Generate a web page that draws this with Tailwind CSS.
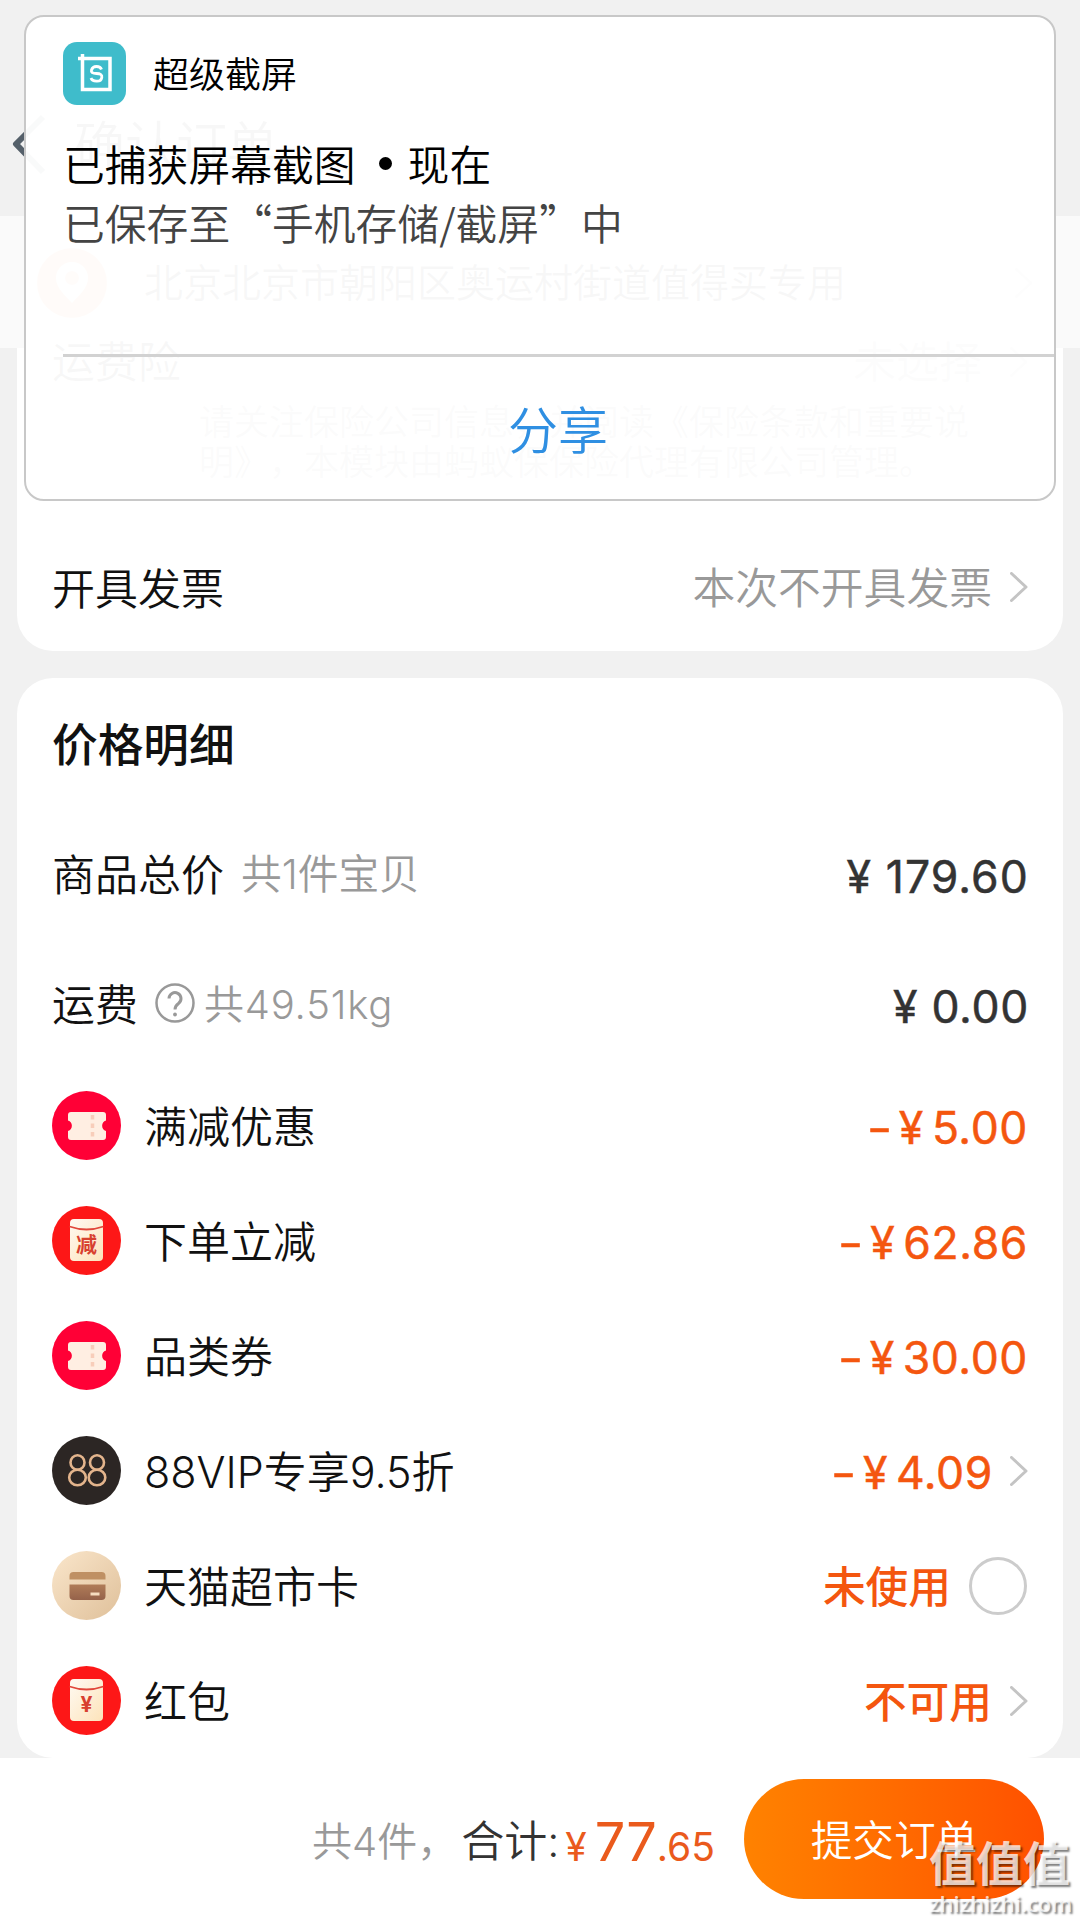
<!DOCTYPE html>
<html lang="zh-CN">
<head>
<meta charset="utf-8">
<title>确认订单</title>
<script src="https://cdn.jsdelivr.net/npm/@tailwindcss/browser@4"></script>
</head>
<body class="relative w-[1080px] h-[1920px] overflow-hidden bg-[#f1f1f1] font-['Inter','Noto_Sans_CJK_SC',sans-serif] text-[43px] leading-[60px] font-[350] text-[#111] [text-spacing-trim:space-all]">
<svg class="absolute size-0">
  <defs>
    <symbol id="chev" viewBox="0 0 18 30"><path d="M1.5 1.5 16 15 1.5 28.5" fill="none" stroke="#c4c4c4" stroke-width="3" stroke-linecap="round" stroke-linejoin="round"/></symbol>
    <linearGradient id="cream" x1="0" y1="0" x2="1" y2="1"><stop offset="0" stop-color="#fffaf2"/><stop offset="1" stop-color="#fde3ba"/></linearGradient>
    <linearGradient id="sand" x1="0" y1="0" x2="1" y2="1"><stop offset="0" stop-color="#fae6cb"/><stop offset="1" stop-color="#dfc09a"/></linearGradient>
    <linearGradient id="brown" x1="0" y1="0" x2="0" y2="1"><stop offset="0" stop-color="#b07c58"/><stop offset="1" stop-color="#95624a"/></linearGradient>
    <symbol id="ticket" viewBox="0 0 69 69"><circle cx="34.5" cy="34.5" r="34.5" fill="#ff0036"/><path d="M19 21H51Q54 21 54 24V29.5A5.5 5.5 0 0 0 54 40V46Q54 49 51 49H19Q16 49 16 46V40A5.5 5.5 0 0 0 16 29.5V24Q16 21 19 21Z" fill="#ffeee2"/><path d="M40.5 24v4.500M40.500 32.500v4.500M40.500 41v4.500" stroke="#f8cdba" stroke-width="3.500"/></symbol>
    <symbol id="packet" viewBox="0 0 69 69"><circle cx="34.5" cy="34.5" r="34.5" fill="#fd1717"/><rect x="18" y="13" width="33" height="42" rx="4" fill="url(#cream)"/><path d="M17.500 20.500Q34.500 26.500 51.500 20.500" fill="none" stroke="#e0473a" stroke-width="1.800"/></symbol>
  </defs>
</svg>

<header class="flex h-[216px] items-end pl-[12px] pb-[40px]">
  <svg class="w-[34px] h-[62px]" viewBox="0 0 34 62"><path d="M31 3 4 30 31 58" fill="none" stroke="#55606a" stroke-width="6" stroke-linejoin="round"/></svg>
  <h1 class="ml-[28px] text-[51px]">确认订单</h1>
</header>

<section class="flex h-[132px] items-center bg-[#fafafa] pt-[2px] pl-[37px] pr-[47px]">
  <svg class="size-[70px]" viewBox="0 0 70 70"><circle cx="35" cy="35" r="35" fill="#ff8a50"/><path d="M35 14a16 16 0 0 1 16 16c0 10-9 17-16 25-7-8-16-15-16-25a16 16 0 0 1 16-16Z" fill="#fff"/><circle cx="35" cy="30" r="7" fill="#ff9a70"/></svg>
  <span class="ml-[37px] flex-1 text-[39px]">北京北京市朝阳区奥运村街道值得买专用</span>
  <svg class="h-[30px] w-[18px]"><use href="#chev"/></svg>
</section>

<section class="mx-[17px] h-[303px] rounded-b-[36px] bg-white pl-[35px] pr-[35px]">
  <div class="flex h-[28px] items-center">
    <span class="flex-1">运费险</span><span class="mr-[28px] text-[#999]">未选择</span>
    <svg class="h-[30px] w-[18px]"><use href="#chev"/></svg>
  </div>
  <p class="mt-[26px] ml-[147px] w-[800px] text-[35px] leading-[40px] text-[#777]">请关注保险公司信息，并阅读《保险条款和重要说<br>明》，本模块由蚂蚁保保险代理有限公司管理。</p>
  <div class="mt-[75px] flex h-[64px] items-center">
    <span class="flex-1">开具发票</span><span class="mr-[18px] text-[42.8px] text-[#999]">本次不开具发票</span>
    <svg class="mb-[4px] h-[30px] w-[18px]"><use href="#chev"/></svg>
  </div>
</section>

<section class="mx-[17px] mt-[27px] h-[1080px] rounded-[36px] bg-white pt-[38px] pl-[35px] pr-[35px]">
  <h2 class="text-[45.7px] font-medium">价格明细</h2>
  <div class="mt-[69px] flex h-[60px] items-center">
    <span>商品总价</span><span class="ml-[17px] flex-1 text-[40.7px] text-[#999]">共1件宝贝</span>
    <span class="-mr-[1px] pt-[3px] text-[44.5px] font-normal tracking-[1.1px] text-[#333] [-webkit-text-stroke:0.5px]">¥ 179.60</span>
  </div>
  <div class="mt-[70px] flex h-[60px] items-center">
    <span>运费</span>
    <svg class="ml-[16px] mb-[5px] size-[42px]" viewBox="0 0 42 42" fill="none" stroke="#999" stroke-width="2.500"><circle cx="21" cy="21" r="18.500"/><path d="M15 16.500a6 6 0 1 1 9.500 5Q21 24 21 27.500" stroke-width="3"/><circle cx="21" cy="32.500" r="1.900" fill="#999" stroke="none"/></svg>
    <span class="ml-[8px] flex-1 text-[40px] tracking-[0.8px] text-[#999]">共49.51kg</span>
    <span class="-mr-[1px] pt-[3px] text-[44.5px] font-normal tracking-[0.7px] text-[#333] [-webkit-text-stroke:0.5px]">¥ 0.00</span>
  </div>

  <ul class="mt-[33px]">
    <li class="flex h-[115px] items-center">
      <svg class="size-[69px]"><use href="#ticket"/></svg>
      <span class="ml-[23px] flex-1 pt-[2px]">满减优惠</span>
      <span class="flex pt-[4px] text-[44.5px] font-normal tracking-[0.6px] text-[#f4560f] [-webkit-text-stroke:0.5px]"><span class="origin-right scale-x-125">-</span><span class="ml-[6px]">¥</span><span class="ml-[8px]">5.00</span></span>
    </li>
    <li class="flex h-[115px] items-center">
      <svg class="size-[69px]" viewBox="0 0 69 69"><use href="#packet"/><text x="34.500" y="46" text-anchor="middle" font-size="21" font-weight="600" fill="#d8402f">减</text></svg>
      <span class="ml-[23px] flex-1 pt-[2px]">下单立减</span>
      <span class="flex pt-[4px] text-[44.5px] font-normal tracking-[0.6px] text-[#f4560f] [-webkit-text-stroke:0.5px]"><span class="origin-right scale-x-125">-</span><span class="ml-[6px]">¥</span><span class="ml-[8px]">62.86</span></span>
    </li>
    <li class="flex h-[115px] items-center">
      <svg class="size-[69px]"><use href="#ticket"/></svg>
      <span class="ml-[23px] flex-1 pt-[2px]">品类券</span>
      <span class="flex pt-[4px] text-[44.5px] font-normal tracking-[0.6px] text-[#f4560f] [-webkit-text-stroke:0.5px]"><span class="origin-right scale-x-125">-</span><span class="ml-[6px]">¥</span><span class="ml-[8px]">30.00</span></span>
    </li>
    <li class="flex h-[115px] items-center">
      <svg class="size-[69px]" viewBox="0 0 69 69"><circle cx="34.500" cy="34.500" r="34.500" fill="#2c2624"/><g fill="none" stroke="#e3b48c" stroke-width="2.600"><ellipse cx="25.500" cy="26.500" rx="7" ry="7.200"/><ellipse cx="25.500" cy="41.500" rx="8.300" ry="7.800"/><ellipse cx="45" cy="26.500" rx="7" ry="7.200"/><ellipse cx="45" cy="41.500" rx="8.300" ry="7.800"/></g></svg>
      <span class="ml-[23px] flex-1 pt-[2px]">88VIP专享9.5折</span>
      <span class="flex pt-[4px] text-[44.5px] font-normal tracking-[0.6px] text-[#f4560f] [-webkit-text-stroke:0.5px]"><span class="origin-right scale-x-125">-</span><span class="ml-[6px]">¥</span><span class="ml-[8px]">4.09</span></span>
      <svg class="ml-[17px] h-[30px] w-[18px]"><use href="#chev"/></svg>
    </li>
    <li class="flex h-[115px] items-center">
      <svg class="size-[69px]" viewBox="0 0 69 69"><circle cx="34.500" cy="34.500" r="34.500" fill="url(#sand)"/><path d="M21.500 21h28q4 0 4 4v3.500H17.500V25q0-4 4-4Z" fill="#bf9063"/><path d="M17.500 33.500h36V45q0 4-4 4h-28q-4 0-4-4Z" fill="url(#brown)"/><path d="M38.500 43h9" stroke="#f5dcc0" stroke-width="3"/></svg>
      <span class="ml-[23px] flex-1 pt-[2px]">天猫超市卡</span>
      <span class="pt-[4px] text-[42.7px] font-medium text-[#f4560f]">未使用</span>
      <span class="ml-[18px] mr-[1px] size-[58px] rounded-full border-[3px] border-[#ccc]"></span>
    </li>
    <li class="flex h-[115px] items-center">
      <svg class="size-[69px]" viewBox="0 0 69 69"><use href="#packet"/><text x="34.500" y="46" text-anchor="middle" font-size="21" font-weight="700" fill="#d8402f">¥</text></svg>
      <span class="ml-[23px] flex-1 pt-[2px]">红包</span>
      <span class="pt-[4px] text-[42.7px] font-medium text-[#f4560f]">不可用</span>
      <svg class="ml-[18px] h-[30px] w-[18px]"><use href="#chev"/></svg>
    </li>
  </ul>
</section>

<footer class="flex h-[162px] items-center bg-white pr-[36px]">
  <span class="ml-[312px] pt-[5px] text-[40px] text-[#999]">共4件，</span>
  <span class="ml-[4px] flex-1 pt-[4px] text-[#333]">合计:</span>
  <span class="mr-[29px] pt-[10px] text-[39px] font-normal text-[#ea5a1c]">¥<span class="ml-[8px] text-[54px]">77</span>.65</span>
  <button class="h-[120px] w-[300px] rounded-full bg-linear-to-r from-[#ff8200] to-[#ff5000] pt-[4px] text-[41.7px] text-white">提交订单</button>
</footer>

<!-- system notification -->
<aside class="absolute top-[15px] left-[24px] h-[486px] w-[1032px] rounded-[20px] border-2 border-[#c8c8c8] bg-white/97 font-['Noto_Sans_CJK_SC',sans-serif] text-black">
  <div class="flex h-[63px] items-center mt-[25px] pl-[37px]">
    <svg class="size-[63px]" viewBox="0 0 63 63"><rect width="63" height="63" rx="14" fill="#3fbccb"/><path d="M15 16.500H47V47.500H19.500V12" fill="none" stroke="#fff" stroke-width="3.500"/><path d="M38.500 27.500Q37.500 24.500 33.500 24.500T28.500 28 33.500 31.500 38.800 35.500 33.500 39.200 28 36" fill="none" stroke="#fff" stroke-width="2.800"/></svg>
    <span class="ml-[27px] mb-[3px] text-[36px]">超级截屏</span>
  </div>
  <p class="mt-[28px] ml-[37px] flex items-center text-[41.8px]">已捕获屏幕截图<span class="mr-[16px] ml-[23px] size-[13px] rounded-full bg-black"></span>现在</p>
  <p class="-mt-[1px] ml-[37px] text-[41.8px] text-[#444]">已保存至“手机存储/截屏”中</p>
  <div class="mt-[102px] ml-[37px] h-[3px] bg-[#d2d2d2]"></div>
  <div class="mt-[40px] pl-[36px] text-center text-[50px] text-[#2f8fe2]">分享</div>
</aside>

<!-- site watermark -->
<div class="absolute top-[1838px] left-[929px] w-[146px] text-white/75 [text-shadow:2px_2px_2px_rgb(0_0_0/0.5)]">
  <div class="text-[47px] leading-[52px] font-bold">值值值</div>
  <div class="font-['Open_Sans',sans-serif] text-[22px] leading-[26px] font-semibold">zhizhizhi.com</div>
</div>
</body>
</html>
